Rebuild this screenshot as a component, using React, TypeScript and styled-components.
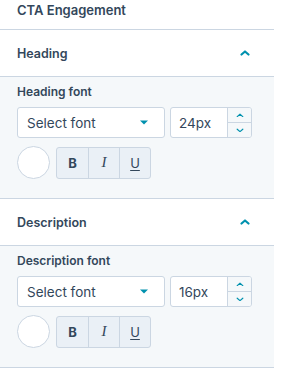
import React from "react";
import styled, { createGlobalStyle } from "styled-components";

const Global = createGlobalStyle`
  html, body { margin: 0; padding: 0; background: #ffffff; }
  body { font-family: Inter, "Liberation Sans", Arial, sans-serif; color: #33475b; }
  * { box-sizing: border-box; }
`;

const Panel = styled.div`
  width: 274px;
  display: flex;
  flex-direction: column;
  background: #ffffff;
`;

const Title = styled.div`
  height: 30px;
  padding: 1px 17px 0;
  font-size: 13px;
  font-weight: 600;
  line-height: 18px;
  border-bottom: 1px solid #cbd6e2;
`;

const SectionHeader = styled.div`
  height: 47px;
  padding: 0 24px 0 17px;
  display: flex;
  align-items: center;
  justify-content: space-between;
  font-size: 12.5px;
  font-weight: 600;
  border-bottom: 1px solid #cbd6e2;
`;

const SectionBody = styled.div`
  background: #f5f8fa;
  padding: 6px 17px 19px;
  border-bottom: 1px solid #cbd6e2;
  display: flex;
  flex-direction: column;
`;

const Label = styled.div`
  font-size: 12px;
  font-weight: 600;
  line-height: 18px;
  margin-bottom: 6px;
`;

const Row = styled.div`
  display: flex;
  align-items: center;
  gap: 5px;
  margin-bottom: 8px;
  &:last-child { margin-bottom: 0; }
`;

const Select = styled.div`
  width: 148px;
  height: 31px;
  background: #ffffff;
  border: 1px solid #cbd6e2;
  border-radius: 3px;
  display: flex;
  align-items: center;
  justify-content: space-between;
  padding: 0 16px 0 9px;
  font-size: 13.5px;
  color: #33475b;
`;

const SizeBox = styled.div`
  width: 82px;
  height: 31px;
  background: #ffffff;
  border: 1px solid #cbd6e2;
  border-radius: 3px;
  display: flex;
  overflow: hidden;
`;

const SizeValue = styled.div`
  flex: 1;
  display: flex;
  align-items: center;
  padding-left: 8px;
  font-size: 13.5px;
`;

const Stepper = styled.div`
  width: 24px;
  display: flex;
  flex-direction: column;
  border-left: 1px solid #cbd6e2;
  background: #f5f8fa;
`;

const Step = styled.div<{ $top?: boolean }>`
  flex: 1;
  display: flex;
  align-items: center;
  justify-content: center;
  border-top: ${(p) => (p.$top ? "none" : "1px solid #cbd6e2")};
`;

const Swatch = styled.div`
  width: 33px;
  height: 33px;
  border-radius: 50%;
  background: #ffffff;
  border: 1px solid #cbd6e2;
  margin-right: 1px;
`;

const Group = styled.div`
  display: flex;
  border: 1px solid #cbd6e2;
  border-radius: 3px;
  overflow: hidden;
  background: #eaf0f6;
`;

const FmtButton = styled.div<{ $kind: "b" | "i" | "u" }>`
  width: 31px;
  height: 30px;
  display: flex;
  align-items: center;
  justify-content: center;
  color: #33475b;
  font-size: ${(p) => (p.$kind === "i" ? "15px" : "13px")};
  border-left: 1px solid #cbd6e2;
  &:first-child { border-left: none; }
  font-weight: ${(p) => (p.$kind === "b" ? 700 : 400)};
  font-style: ${(p) => (p.$kind === "i" ? "italic" : "normal")};
  font-family: ${(p) => (p.$kind === "i" ? '"Liberation Serif", serif' : "inherit")};
  text-decoration: ${(p) => (p.$kind === "u" ? "underline" : "none")};
  text-underline-offset: 2px;
`;

const Chevron = ({ down, size = 10, color = "#0091ae", sw = 2 }: { down?: boolean; size?: number; color?: string; sw?: number }) => (
  <svg width={size} height={size * 0.6} viewBox="0 0 10 6">
    <path
      d={down ? "M1.5 1.5 L5 4.5 L8.5 1.5" : "M1.5 4.5 L5 1.5 L8.5 4.5"}
      fill="none"
      stroke={color}
      strokeWidth={sw}
      strokeLinecap="round"
      strokeLinejoin="round"
    />
  </svg>
);

const Caret = () => (
  <svg width="8" height="5" viewBox="0 0 8 5">
    <path d="M0 0.5 H8 L4 4.5 Z" fill="#0091ae" />
  </svg>
);

const FontSection = ({ title, label, size }: { title: string; label: string; size: string }) => (
  <>
    <SectionHeader>
      {title}
      <Chevron size={10} sw={2.2} />
    </SectionHeader>
    <SectionBody>
      <Label>{label}</Label>
      <Row>
        <Select>
          Select font
          <Caret />
        </Select>
        <SizeBox>
          <SizeValue>{size}</SizeValue>
          <Stepper>
            <Step $top>
              <Chevron size={8} sw={1.5} />
            </Step>
            <Step>
              <Chevron down size={8} sw={1.5} />
            </Step>
          </Stepper>
        </SizeBox>
      </Row>
      <Row>
        <Swatch />
        <Group>
          <FmtButton $kind="b">B</FmtButton>
          <FmtButton $kind="i">I</FmtButton>
          <FmtButton $kind="u">U</FmtButton>
        </Group>
      </Row>
    </SectionBody>
  </>
);

export default function App() {
  return (
    <>
      <Global />
      <Panel>
        <Title>CTA Engagement</Title>
        <FontSection title="Heading" label="Heading font" size="24px" />
        <FontSection title="Description" label="Description font" size="16px" />
      </Panel>
    </>
  );
}
